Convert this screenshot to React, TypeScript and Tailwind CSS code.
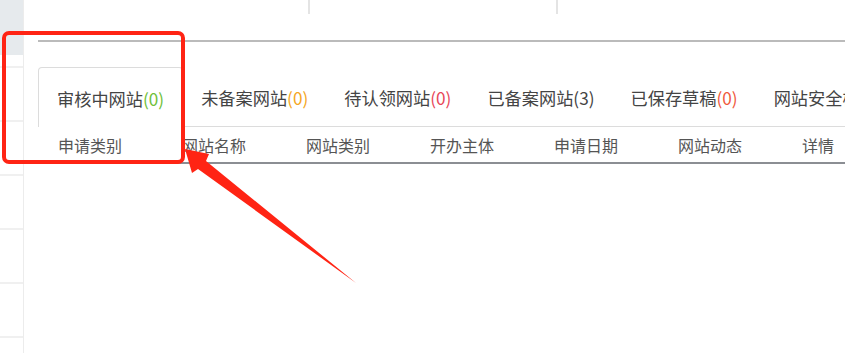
import React from 'react';

interface TabItem {
  label: string;
  count: string;
  color: string;
}

const TABS: TabItem[] = [
  { label: '审核中网站', count: '(0)', color: 'text-[#6fbf3a]' },
  { label: '未备案网站', count: '(0)', color: 'text-[#f5a623]' },
  { label: '待认领网站', count: '(0)', color: 'text-[#e8475a]' },
  { label: '已备案网站', count: '(3)', color: 'text-[#444]' },
  { label: '已保存草稿', count: '(0)', color: 'text-[#f05a3c]' },
  { label: '网站安全检测', count: '(0)', color: 'text-[#f05a3c]' },
];

const COLUMNS = ['申请类别', '网站名称', '网站类别', '开办主体', '申请日期', '网站动态', '详情'];

const App: React.FC = () => {
  return (
    <div
      className="relative flex w-[845px] h-[353px] overflow-hidden bg-white"
      style={{ fontFamily: '"Noto Sans CJK SC", "Noto Sans", sans-serif' }}
    >
      {/* left rail */}
      <div className="w-[24px] shrink-0 flex flex-col border-r border-[#ececec]">
        <div className="h-[55px] bg-[#e6eaed]"></div>
        <div className="h-[13px] border-b-2 border-[#f0f0f0]"></div>
        {[0, 1, 2, 3, 4].map((i) => (
          <div key={i} className="h-[54px] shrink-0 border-b-2 border-[#f0f0f0]"></div>
        ))}
      </div>

      {/* main */}
      <div className="flex-1 min-w-0 pl-[14px] flex flex-col">
        <div className="flex h-[14px]">
          <div className="w-[272px] border-r-2 border-[#e4e4e4]"></div>
          <div className="w-[248px] border-r-2 border-[#e4e4e4]"></div>
        </div>
        <div className="mt-[26px] h-[2px] bg-[#bbbbbb]"></div>

        {/* tabs */}
        <div className="mt-[25px] flex h-[60px] overflow-hidden">
          {TABS.map((tab, i) => (
            <div
              key={tab.label}
              className={`shrink-0 flex items-center px-[18px] pt-[3px] text-[17.2px] text-[#444] whitespace-nowrap ${
                i === 0
                  ? 'border border-b-0 border-[#dcdcdc] rounded-t-[4px]'
                  : 'border-b border-[#dcdcdc]'
              }`}
            >
              {tab.label}
              <span className={tab.color}>{tab.count}</span>
            </div>
          ))}
          <div className="flex-1 border-b border-[#dcdcdc]"></div>
        </div>

        {/* table header */}
        <div className="flex h-[37px] border-b-2 border-[#8b8e93]">
          {COLUMNS.map((col) => (
            <div key={col} className="w-[124px] shrink-0 pl-[20px] flex items-center text-[16px] text-[#555]">
              {col}
            </div>
          ))}
        </div>
      </div>

      {/* annotation */}
      <svg className="absolute inset-0 pointer-events-none" width="845" height="353" viewBox="0 0 845 353">
        <rect x="4" y="33" width="179" height="129" rx="5" fill="none" stroke="#ff2414" strokeWidth="4" />
        <polygon
          points="185,149 209,154 206,161 356,283 198,169 192,173"
          fill="#ff2414"
        />
      </svg>
    </div>
  );
};

export default App;
